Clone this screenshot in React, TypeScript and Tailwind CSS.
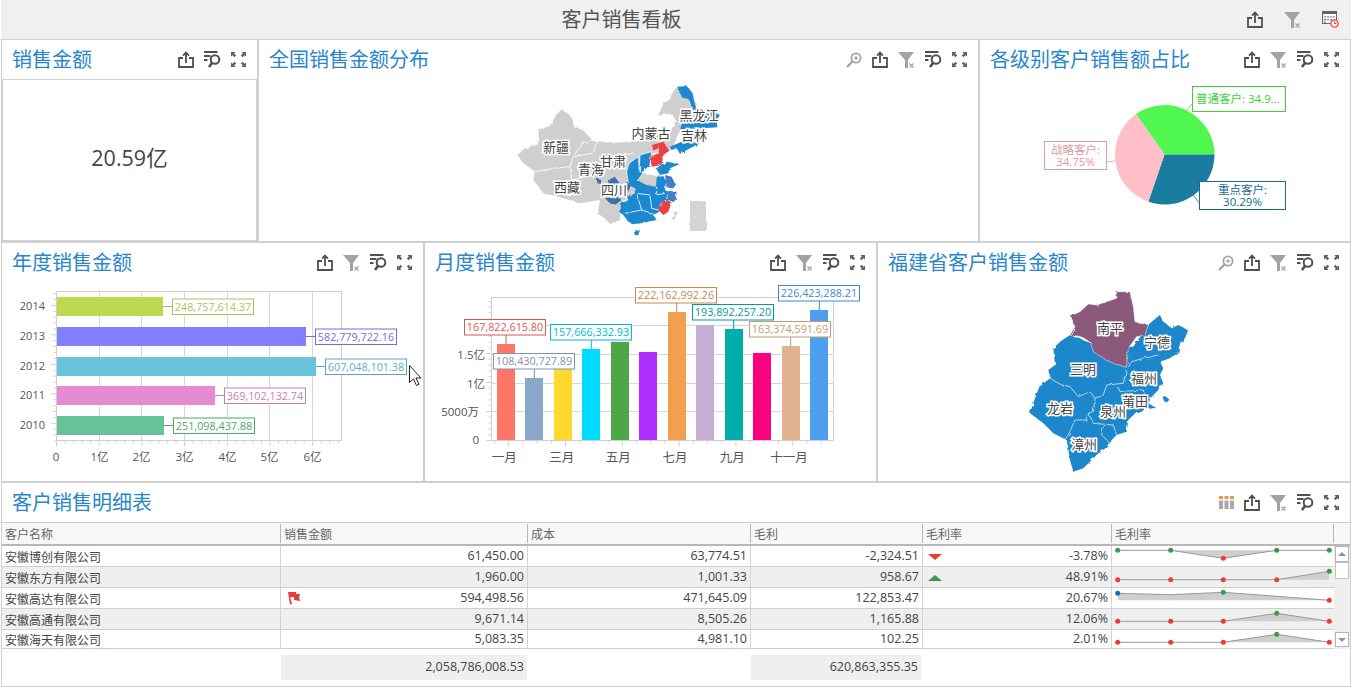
import type { ReactNode } from 'react';

const FONT = "font-['Open_Sans','Noto_Sans_CJK_SC',sans-serif]";
const CJK = "'Noto Sans CJK SC','Noto Sans',sans-serif";

function ShareIcon() {
  return (
    <svg width="16" height="17" viewBox="0 0 16 17" fill="none" stroke="#505050" strokeWidth="1.8">
      <path d="M5 7H1v9h14V7h-4" />
      <path d="M8 12V2M5 4.600 8 1.600l3 3" />
    </svg>
  );
}

function FilterIcon() {
  return (
    <svg width="17" height="17" viewBox="0 0 17 17">
      <path d="M0 1h16l-6 8v8H7V9z" fill="#a3a3a3" />
      <path d="M11.500 12.500l4 4M15.500 12.500l-4 4" stroke="#a3a3a3" strokeWidth="1.200" fill="none" />
    </svg>
  );
}

function ListSearchIcon() {
  return (
    <svg width="17" height="17" viewBox="0 0 17 17" fill="none" stroke="#505050" strokeWidth="1.800">
      <path d="M0 1h13.500M0 5h6.500M0 9h3.500" />
      <circle cx="11" cy="8.500" r="4.300" strokeWidth="2" />
      <path d="M8 12 5 16" strokeWidth="2.600" />
    </svg>
  );
}

function FullIcon() {
  return (
    <svg width="15" height="15" viewBox="0 0 15 15" fill="#626262">
      <path d="M0 0h4.500L3.200 1.500l2 2-1.700 1.700-2-2L0 4.500zM15 0v4.500l-1.500-1.300-2 2-1.700-1.700 2-2L10.500 0zM0 15v-4.500l1.500 1.300 2-2 1.700 1.700-2 2L4.500 15zM15 15h-4.500l1.300-1.500-2-2 1.700-1.700 2 2 1.500-1.300z" />
    </svg>
  );
}

function ZoomIcon() {
  return (
    <svg width="16" height="16" viewBox="0 0 16 16" fill="none" stroke="#a6a6a6">
      <circle cx="10" cy="6" r="4.600" strokeWidth="1.800" />
      <circle cx="10" cy="6" r="1.200" fill="#a6a6a6" />
      <path d="M6.500 9.500 1 15" strokeWidth="2.400" />
    </svg>
  );
}

function ColumnsIcon() {
  return (
    <svg width="15" height="13" viewBox="0 0 15 13">
      <path d="M0 0h4v3H0zM5.500 0h4v3h-4zM11 0h4v3h-4z" fill="#e8994a" />
      <path d="M0 4.500h4V13H0zM5.500 4.500h4V13h-4zM11 4.500h4V13h-4z" fill="#a8a8a8" />
    </svg>
  );
}

function ScheduleIcon() {
  return (
    <svg width="17" height="17" viewBox="0 0 17 17">
      <rect x="0.500" y="0.500" width="14" height="12" fill="#fff" stroke="#666" />
      <rect x="0.500" y="0.500" width="14" height="2.500" fill="#666" />
      <path d="M2 5h2v1.500H2zM5 5h2v1.500H5zM8 5h2v1.500H8zM11 5h2v1.500h-2zM5 8h2v1.500H5zM8 8h2v1.500H8zM2 10.500h2V12H2z" fill="#999" />
      <path d="M2 8h2v1.500H2z" fill="#e33" />
      <circle cx="12.500" cy="12.500" r="3.700" fill="#fff" stroke="#e33" strokeWidth="1.200" />
      <path d="M12.500 10.500v2h2" fill="none" stroke="#e33" />
    </svg>
  );
}

type PanelProps = { title: string; width: string; icons: ReactNode; children: ReactNode };

function Panel({ title, width, icons, children }: PanelProps) {
  return (
    <section className={`flex h-full flex-col border border-[#d0d0d0] bg-white ${width}`}>
      <header className="flex h-[39px] shrink-0 items-center justify-between pl-[10px] pr-[11px]">
        <h2 className="text-[20px] font-normal leading-none text-[#2a86cc]">{title}</h2>
        <div className="flex items-center gap-[10px]">{icons}</div>
      </header>
      <div className="min-h-0 flex-1">{children}</div>
    </section>
  );
}

function Tag({ x, y, w, h = 15.500, color, text, textColor }: { x: number; y: number; w: number; h?: number; color: string; text: string; textColor?: string }) {
  return (
    <g>
      <rect x={x + 0.5} y={y + 0.5} width={w} height={h} fill="#fff" stroke={color} />
      <text x={x + w / 2 + 0.5} y={y + h / 2 + 4.3} textAnchor="middle" fontSize="10.800" fill={textColor ?? color}>
        {text}
      </text>
    </g>
  );
}

function MapLabel({ x, y, text }: { x: number; y: number; text: string }) {
  return (
    <text x={x} y={y + 4.500} textAnchor="middle" fontSize="13" fill="#444" stroke="#fff" strokeWidth="3" paintOrder="stroke" style={{ fontFamily: CJK }}>
      {text}
    </text>
  );
}

// rough edge for the map shapes, the source geometry is far more detailed than what's drawn here
function RoughFilter({ id }: { id: string }) {
  return (
    <filter id={id} x="-5%" y="-5%" width="110%" height="110%">
      <feTurbulence type="fractalNoise" baseFrequency="0.07" numOctaves="2" seed="4" />
      <feDisplacementMap in="SourceGraphic" scale="9" />
    </filter>
  );
}

function ChinaMap() {
  return (
    <svg className="block h-[161px] w-[719px]" viewBox="259 79 719 161">
      <defs>
        <RoughFilter id="rough-china" />
      </defs>
      <g transform="translate(500 40) scale(0.3333)" strokeLinejoin="round" filter="url(#rough-china)">
        <path
          d="M52 345 75 325 118 312 115 268 150 258 168 225 185 208 205 222 218 238 222 262 250 270 278 302 340 308 400 305 455 292 510 272 530 245 515 222 475 225 490 192 510 178 522 150 535 140 590 190 585 240 540 270 515 330 460 340 430 400 480 410 470 470 400 460 370 480 360 540 330 552 310 530 292 522 300 480 240 490 180 472 130 460 100 420 105 395 70 370z"
          fill="#cfcfcf"
        />
        <path d="M105 395 160 385 210 380 220 350 280 340 290 305M210 380 215 420 300 400M220 350 245 312 280 300M300 400 330 350 400 340" fill="none" stroke="#fff" strokeWidth="2.500" />
        <path d="M532 140 560 138 578 160 585 195 592 210 578 208 568 180 545 170z" fill="#1f88cf" />
        <path d="M592 210 648 220 660 225 650 240 652 262 610 265 562 266 540 268 546 250 600 245z" fill="#1f88cf" />
        <path d="M560 270 620 270 615 295 590 302 570 300z" fill="#1f88cf" />
        <path d="M510 320 545 305 570 305 600 310 570 325 540 342 530 325 515 330z" fill="#1f88cf" />
        <path d="M456 315 490 305 508 332 490 345 485 375 455 380 450 350 475 340 480 322 460 332z" fill="#ee4040" />
        <path d="M468 385 500 365 540 372 510 385 505 400 480 405z" fill="#1f88cf" />
        <path d="M420 345 455 335 450 375 430 395 418 395z" fill="#1f88cf" stroke="#fff" strokeWidth="2" />
        <path d="M388 370 415 350 418 395 430 398 410 425 385 430 380 395z" fill="#1f88cf" stroke="#fff" strokeWidth="2" />
        <path d="M290 415 303 420 303 432 292 430zM330 418 345 410 358 428 340 436 325 430zM380 432 395 430 385 455 378 450zM315 475 350 470 365 480 345 495 330 490z" fill="#3a6fa8" />
        <path
          d="M380 432 400 420 420 425 440 435 468 440 470 412 490 408 498 425 495 450 505 455 498 480 480 490 478 515 460 525 470 540 445 545 425 550 400 552 385 545 370 525 358 515 365 490 385 480 380 470 405 460 405 445z"
          fill="#1f88cf"
        />
        <path d="M410 460 450 465 455 505 475 510M410 460 425 510 460 522M425 510 375 520M470 440 470 465 495 460" fill="none" stroke="#fff" strokeWidth="2.500" />
        <path d="M495 405 515 410 527 435 520 445 500 442z" fill="#4180c9" />
        <path d="M505 452 530 455 527 480 500 487z" fill="#4180c9" />
        <path d="M490 482 515 487 505 515 490 525 477 512 482 490z" fill="#ee4040" />
        <path d="M402 577 420 570 415 585 405 586z" fill="#1f88cf" />
        <path d="M525 515 533 515 522 542 516 535z" fill="#cfcfcf" />
        <rect x="570" y="483" width="48" height="90" fill="#d4d4d4" />
        <path d="M590 495h3v3h-3zM605 510h3v3h-3zM585 530h3v3h-3zM600 545h3v3h-3zM578 555h3v3h-3z" fill="#f4f4f4" />
      </g>
      <MapLabel x={556} y={147} text="新疆" />
      <MapLabel x={591} y={169} text="青海" />
      <MapLabel x={613} y={161} text="甘肃" />
      <MapLabel x={567} y={187} text="西藏" />
      <MapLabel x={614} y={190} text="四川" />
      <MapLabel x={651} y={133} text="内蒙古" />
      <MapLabel x={699} y={115} text="黑龙江" />
      <MapLabel x={694} y={135} text="吉林" />
    </svg>
  );
}

function PieChart() {
  return (
    <svg className="block h-[161px] w-[370px]" viewBox="980 79 370 161">
      <path d="M1164.500 154.500 1136 114A50 50 0 0 1 1214.500 154.500z" fill="#4ff74f" />
      <path d="M1164.500 154.500H1214.500A50 50 0 0 1 1148.300 201.800z" fill="#1a7c9f" />
      <path d="M1164.500 154.500 1148.300 201.800A50 50 0 0 1 1136 114z" fill="#ffbfc9" />
      <path d="M1187 110 1192 104" stroke="#8fc98f" fill="none" />
      <path d="M1107 162 1115 161" stroke="#e3b0b8" fill="none" />
      <path d="M1193 195 1200 204" stroke="#5a8fa5" fill="none" />
      <rect x="1192.500" y="86.500" width="93" height="25" fill="#fff" stroke="#3fd03f" />
      <text x="1196" y="103" fontSize="11.500" fill="#3ed03e">普通客户: 34.9...</text>
      <rect x="1044.500" y="141.500" width="62" height="28" fill="#fff" stroke="#d99fa8" />
      <text textAnchor="middle" fontSize="11.500" fill="#dc9aa5">
        <tspan x="1075.500" y="153.500">战略客户:</tspan>
        <tspan x="1075.500" y="165.500">34.75%</tspan>
      </text>
      <rect x="1199.500" y="181.500" width="86" height="28" fill="#fff" stroke="#1a6c8c" />
      <text textAnchor="middle" fontSize="11.500" fill="#1a6c8c">
        <tspan x="1242.500" y="193.500">重点客户:</tspan>
        <tspan x="1242.500" y="205.500">30.29%</tspan>
      </text>
    </svg>
  );
}

const YEARS = [
  { year: '2014', top: 297, end: 163, fill: '#bcd94f', line: '#b3bf5e', text: '#b3bf5e', value: '248,757,614.37', labelX: 172 },
  { year: '2013', top: 327, end: 306, fill: '#7f7fff', line: '#6f6fd8', text: '#6f6fd8', value: '582,779,722.16', labelX: 315 },
  { year: '2012', top: 357, end: 316, fill: '#68c4dd', line: '#5ba6b8', text: '#5bb0c4', value: '607,048,101.38', labelX: 325 },
  { year: '2011', top: 386, end: 215, fill: '#e68ad2', line: '#c67fb4', text: '#c67fb4', value: '369,102,132.74', labelX: 224 },
  { year: '2010', top: 416, end: 164, fill: '#66c397', line: '#4ba670', text: '#4ba670', value: '251,098,437.88', labelX: 173 },
];

function YearChart() {
  const grid = [99.500, 141.500, 184.500, 227.500, 269.500, 312.500];
  const xLabels = ['0', '1亿', '2亿', '3亿', '4亿', '5亿', '6亿'];
  return (
    <svg className="block h-[199px] w-[421px]" viewBox="2 282 421 199">
      <rect x="56.500" y="291.500" width="285" height="149" fill="#fff" stroke="#cfcfcf" />
      {grid.map((x) => (
        <path key={x} d={`M${x} 291V441`} stroke="#d6d6d6" fill="none" />
      ))}
      {Array.from({ length: 34 }, (_, i) => (
        <path key={i} d={`M${56.500 + i * 8.540} 441v${i % 5 === 0 ? 5 : 2.500}`} stroke="#cfcfcf" fill="none" />
      ))}
      {Array.from({ length: 26 }, (_, i) => (
        <path key={i} d={`M56 ${293.500 + i * 5.900}h-${i % 5 === 2 ? 5 : 2.500}`} stroke="#cfcfcf" fill="none" />
      ))}
      {YEARS.map((y) => (
        <g key={y.year}>
          <text x="45" y={y.top + 12.800} textAnchor="end" fontSize="11" fill="#555">
            {y.year}
          </text>
          <rect x="57" y={y.top} width={y.end - 57} height="19" fill={y.fill} />
          <path d={`M${y.end} ${y.top + 9.500}H${y.labelX}`} stroke={y.line} fill="none" />
          <Tag x={y.labelX} y={y.top + 1.500} w={81} color={y.line} text={y.value} textColor={y.text} />
        </g>
      ))}
      {xLabels.map((t, i) => (
        <text key={t} x={i === 0 ? 56 : grid[i - 1]} y="460.500" textAnchor="middle" fontSize="11.500" fill="#555">
          {t}
        </text>
      ))}
      <path d="M409.500 365.500v17l4-3.500 3 6.500 2.500-1.200-3-6.300h5z" fill="#fff" stroke="#222" />
    </svg>
  );
}

// coordinates read off the 3x crop, so they get divided back when drawn
const MONTHS = [
  { x: 216, top: 297, fill: '#ff7566' },
  { x: 300, top: 399, fill: '#8aa8cc' },
  { x: 387, top: 360, fill: '#ffd92b' },
  { x: 471, top: 312, fill: '#00dcff' },
  { x: 558, top: 291, fill: '#4ca845' },
  { x: 642, top: 321, fill: '#ae2fff' },
  { x: 729, top: 201, fill: '#f2a04f' },
  { x: 813, top: 240, fill: '#c4aed4' },
  { x: 900, top: 252, fill: '#00adab' },
  { x: 984, top: 324, fill: '#ff007f' },
  { x: 1071, top: 303, fill: '#e3b391' },
  { x: 1155, top: 195, fill: '#4f9ff0' },
];

const MONTH_TAGS = [
  { x: 119, y: 224, color: '#df5550', text: '167,822,615.80', lx: 243, ly: 269, ly2: 297 },
  { x: 377, y: 238, color: '#00bcd4', text: '157,666,332.93', lx: 499, ly: 284, ly2: 312 },
  { x: 632, y: 127, color: '#c58a50', text: '222,162,992.26', lx: 755, ly: 173, ly2: 201 },
  { x: 802, y: 178, color: '#009c9a', text: '193,892,257.20', lx: 926, ly: 224, ly2: 252 },
  { x: 973, y: 230, color: '#c0a070', text: '163,374,591.69', lx: 1097, ly: 275, ly2: 303 },
  { x: 1060, y: 122, color: '#3f88d0', text: '226,423,288.21', lx: 1183, ly: 167, ly2: 195 },
  { x: 206, y: 325, color: '#7f92b2', text: '108,430,727.89', lx: 328, ly: 371, ly2: 399 },
];

function MonthChart() {
  const zx = (v: number) => 425 + v / 3;
  const zy = (v: number) => 245 + v / 3;
  const gridY = [325.500, 354.500, 383.500, 411.500];
  return (
    <svg className="block h-[199px] w-[451px]" viewBox="425 282 451 199">
      <rect x="491.500" y="297.500" width="342" height="143" fill="#fff" stroke="#cfcfcf" />
      {gridY.map((y) => (
        <path key={y} d={`M491 ${y}H834`} stroke="#d6d6d6" fill="none" />
      ))}
      {Array.from({ length: 25 }, (_, i) => (
        <path key={i} d={`M491 ${440.500 - i * 5.800}h-${i % 5 === 0 ? 5 : 2.500}`} stroke="#cfcfcf" fill="none" />
      ))}
      {Array.from({ length: 24 }, (_, i) => (
        <path key={i} d={`M${494.500 + i * 14.200} 441v${i % 4 === 1 ? 5 : 2.500}`} stroke="#cfcfcf" fill="none" />
      ))}
      {MONTHS.map((m) => (
        <rect key={m.x} x={zx(m.x)} y={zy(m.top)} width="18" height={440 - zy(m.top)} fill={m.fill} />
      ))}
      <text x="485" y="358.500" textAnchor="end" fontSize="11.500" fill="#555">1.5亿</text>
      <text x="485" y="387.500" textAnchor="end" fontSize="11.500" fill="#555">1亿</text>
      <text x="479" y="415.500" textAnchor="end" fontSize="11.500" fill="#555">5000万</text>
      <text x="479" y="444" textAnchor="end" fontSize="11.500" fill="#555">0</text>
      {[
        ['一月', 238],
        ['三月', 410],
        ['五月', 580],
        ['七月', 750],
        ['九月', 922],
        ['十一月', 1092],
      ].map(([t, x]) => (
        <text key={t} x={zx(x as number)} y="461.500" textAnchor="middle" fontSize="12.500" fill="#555">
          {t}
        </text>
      ))}
      {MONTH_TAGS.map((t) => (
        <g key={t.text}>
          <path d={`M${zx(t.lx)} ${zy(t.ly)}V${zy(t.ly2)}`} stroke={t.color} fill="none" />
          <Tag x={Math.floor(zx(t.x))} y={Math.floor(zy(t.y))} w={81} color={t.color} text={t.text} />
        </g>
      ))}
    </svg>
  );
}

function FujianMap() {
  return (
    <svg className="block h-[199px] w-[472px]" viewBox="878 282 472 199">
      <defs>
        <RoughFilter id="rough-fujian" />
      </defs>
      <g transform="translate(1000 280) scale(0.3333)" strokeLinejoin="round" filter="url(#rough-fujian)">
        <path
          d="M210 165 180 185 160 205 165 255 145 270 150 295 118 320 105 355 90 400 130 430 160 460 200 480 210 540 220 575 250 565 270 545 295 520 325 500 335 480 350 465 380 455 385 420 410 395 415 400 440 385 470 385 445 370 455 350 470 335 490 310 480 285 490 265 480 245 495 240 510 235 535 215 540 190 555 175 565 150 535 135 515 145 490 125 480 105 455 125 445 135 400 200 300 200z"
          fill="#1f88cb"
        />
        <path d="M495 350 505 355 498 368 490 360z" fill="#1f88cb" />
        <path d="M385 262 395 245 430 235 475 225" fill="none" stroke="#fff" strokeWidth="2" />
        <path d="M380 265 370 310 320 315 310 345 285 355" fill="none" stroke="#fff" strokeWidth="2" />
        <path d="M150 295 185 315 210 320 235 350 270 335 285 355 280 395 265 400 258 420 225 420 205 465 195 478" fill="none" stroke="#fff" strokeWidth="2" />
        <path d="M265 400 280 430 340 435 350 465M310 440 305 465 330 490" fill="none" stroke="#fff" strokeWidth="2" />
        <path d="M355 322 360 335 430 330 435 350 415 385" fill="none" stroke="#fff" strokeWidth="2" />
        <path
          d="M212 108 240 95 265 72 290 75 350 55 350 35 390 35 400 80 405 125 445 135 435 165 410 170 385 205 380 262 340 250 310 235 280 215 275 190 245 170 210 165 225 140z"
          fill="#8b5a7a"
          stroke="#fff"
          strokeWidth="1.500"
        />
      </g>
      <MapLabel x={1110} y={328} text="南平" />
      <MapLabel x={1157} y={342} text="宁德" />
      <MapLabel x={1083} y={369} text="三明" />
      <MapLabel x={1144} y={378} text="福州" />
      <MapLabel x={1135} y={401} text="莆田" />
      <MapLabel x={1113} y={411} text="泉州" />
      <MapLabel x={1060} y={408} text="龙岩" />
      <MapLabel x={1084} y={444} text="漳州" />
    </svg>
  );
}

const G = '#3a9a4a';
const R = '#ee3a3a';
const B = '#1a6cc0';
const SPARK_X = [5.700, 58.700, 111.300, 164.700, 217.300];

type Spark = { base: number; ys: number[]; colors: (string | null)[] };

function Sparkline({ base, ys, colors }: Spark) {
  const line = ys.map((y, i) => `${SPARK_X[i]},${y}`).join(' ');
  const area = `${SPARK_X[0]},${base} ${line} ${SPARK_X[4]},${base}`;
  return (
    <svg className="block h-[20px] w-[222px]" viewBox="0 0 222 20">
      <polygon points={area} fill="#cfcfcf" />
      <polyline points={line} fill="none" stroke="#999" />
      {colors.map((c, i) => c && <circle key={i} cx={SPARK_X[i]} cy={ys[i]} r="2.500" fill={c} />)}
    </svg>
  );
}

type Row = { name: string; sales: string; cost: string; profit: string; rate: string; mark?: 'up' | 'down'; flag?: boolean; spark: Spark };

const ROWS: Row[] = [
  { name: '安徽博创有限公司', sales: '61,450.00', cost: '63,774.51', profit: '-2,324.51', rate: '-3.78%', mark: 'down', spark: { base: 4.300, ys: [4.300, 4.300, 12.300, 4.300, 4.300], colors: [G, G, R, G, G] } },
  { name: '安徽东方有限公司', sales: '1,960.00', cost: '1,001.33', profit: '958.67', rate: '48.91%', mark: 'up', spark: { base: 12.700, ys: [12.700, 12.700, 12.700, 12.700, 4.300], colors: [R, R, R, R, G] } },
  { name: '安徽高达有限公司', sales: '594,498.56', cost: '471,645.09', profit: '122,853.47', rate: '20.67%', flag: true, spark: { base: 12.300, ys: [5.300, 6.700, 4.300, 8.300, 12.300], colors: [B, null, G, null, R] } },
  { name: '安徽高通有限公司', sales: '9,671.14', cost: '8,505.26', profit: '1,165.88', rate: '12.06%', spark: { base: 12.300, ys: [12.300, 12.300, 12.300, 4.300, 12.300], colors: [R, R, R, G, R] } },
  { name: '安徽海天有限公司', sales: '5,083.35', cost: '4,981.10', profit: '102.25', rate: '2.01%', spark: { base: 12.300, ys: [12.300, 12.300, 12.300, 4.300, 12.300], colors: [R, R, R, G, R] } },
];

function DetailTable() {
  return (
    <div className="text-[12px] leading-none text-[#444]">
      <div className="flex h-[24px] border-y border-y-[#cfcfcf] border-b-2 border-b-[#b8b8b8] bg-[#f7f7f7] text-[#666]">
        {[
          ['客户名称', 'w-[279px]'],
          ['销售金额', 'w-[247px]'],
          ['成本', 'w-[223px]'],
          ['毛利', 'w-[172px]'],
          ['毛利率', 'w-[189px]'],
          ['毛利率', 'w-[222px]'],
        ].map(([t, w], i) => (
          <div key={i} className={`flex h-[19px] items-center self-center border-r border-[#b8b8b8] pl-[3px] pt-[2px] ${w}`}>
            {t}
          </div>
        ))}
      </div>
      <div className="flex">
        <div className="w-[1332px]">
          {ROWS.map((r, i) => (
            <div key={r.name} className={`flex items-center border-b border-[#cfcfcf] text-[12.5px] ${i === 4 ? 'h-[19px]' : 'h-[21px]'} ${i % 2 === 1 ? 'bg-[#efefef]' : 'bg-white'}`}>
              <div className="flex h-full w-[279px] items-center border-r border-[#d4d4d4] pl-[3px] pt-[3px] text-[12px]">{r.name}</div>
              <div className="relative flex h-full w-[247px] items-center justify-end border-r border-[#d4d4d4] pr-[3px] pt-[1px]">
                {r.flag && (
                  <svg className="absolute left-[6px] top-[3px]" width="14" height="14" viewBox="0 0 14 14" fill="#ee3a3a">
                    <path d="M1 1 9 1 9 3 13 3 12 7 13.500 10 7 9 7 6 3.200 6 5 13 3 13.500z" />
                  </svg>
                )}
                {r.sales}
              </div>
              <div className="flex h-full w-[223px] items-center justify-end border-r border-[#d4d4d4] pr-[3px] pt-[1px]">{r.cost}</div>
              <div className="flex h-full w-[172px] items-center justify-end border-r border-[#d4d4d4] pr-[3px] pt-[1px]">{r.profit}</div>
              <div className="flex h-full w-[189px] items-center justify-between border-r border-[#d4d4d4] pl-[5px] pr-[3px] pt-[1px]">
                <span className="block w-[14px]">
                  {r.mark === 'down' && <span className="block h-0 w-0 border-x-[7px] border-t-[6px] border-x-transparent border-t-[#ee3a3a]" />}
                  {r.mark === 'up' && <span className="block h-0 w-0 border-x-[7px] border-b-[6px] border-x-transparent border-b-[#3a9a4a]" />}
                </span>
                {r.rate}
              </div>
              <div className="h-full w-[222px]">
                <Sparkline {...r.spark} />
              </div>
            </div>
          ))}
        </div>
        <div className="flex w-[16px] flex-col bg-[#efefef] pl-[1px] pr-[1px]">
          <div className="flex h-[16px] items-center justify-center border border-[#b5b5b5] bg-white">
            <span className="h-0 w-0 border-x-[4px] border-b-[4px] border-x-transparent border-b-[#8f8fa0]" />
          </div>
          <div className="h-[17px] border border-[#c2c2c2] bg-white" />
          <div className="flex-1" />
          <div className="mb-[2px] flex h-[15px] items-center justify-center border border-[#b5b5b5] bg-white">
            <span className="h-0 w-0 border-x-[4px] border-t-[4px] border-x-transparent border-t-[#8f8fa0]" />
          </div>
        </div>
      </div>
      <div className="flex pt-[6px] text-[12.5px]">
        <div className="flex h-[25px] w-[246px] translate-x-[279px] items-center justify-end bg-[#efefef] pr-[3px]">2,058,786,008.53</div>
        <div className="flex h-[25px] w-[170px] translate-x-[503px] items-center justify-end bg-[#efefef] pr-[3px]">620,863,355.35</div>
      </div>
    </div>
  );
}

export default function App() {
  return (
    <div className={`h-[689px] w-[1351px] overflow-hidden bg-white pl-px text-[#444] ${FONT}`}>
      <div className="flex h-[39px] items-center bg-[#f0f0f0]">
        <h1 className="flex-1 text-center text-[20px] font-normal text-[#555]">客户销售看板</h1>
        <div className="flex w-[109px] items-center gap-[21px] pl-[5px]">
          <ShareIcon />
          <FilterIcon />
          <ScheduleIcon />
        </div>
      </div>
      <div className="flex h-[203px]">
        <Panel title="销售金额" width="w-[257px]" icons={<><ShareIcon /><ListSearchIcon /><FullIcon /></>}>
          <div className="flex h-full items-center justify-center border border-[#d0d0d0] pb-[3px] text-[21.500px]">20.59亿</div>
        </Panel>
        <Panel title="全国销售金额分布" width="w-[721px]" icons={<><ZoomIcon /><ShareIcon /><FilterIcon /><ListSearchIcon /><FullIcon /></>}>
          <ChinaMap />
        </Panel>
        <Panel title="各级别客户销售额占比" width="w-[372px]" icons={<><ShareIcon /><FilterIcon /><ListSearchIcon /><FullIcon /></>}>
          <PieChart />
        </Panel>
      </div>
      <div className="flex h-[240px]">
        <Panel title="年度销售金额" width="w-[423px]" icons={<><ShareIcon /><FilterIcon /><ListSearchIcon /><FullIcon /></>}>
          <YearChart />
        </Panel>
        <Panel title="月度销售金额" width="w-[453px]" icons={<><ShareIcon /><FilterIcon /><ListSearchIcon /><FullIcon /></>}>
          <MonthChart />
        </Panel>
        <Panel title="福建省客户销售金额" width="w-[474px]" icons={<><ZoomIcon /><ShareIcon /><FilterIcon /><ListSearchIcon /><FullIcon /></>}>
          <FujianMap />
        </Panel>
      </div>
      <div className="h-[205px]">
        <Panel title="客户销售明细表" width="w-[1350px]" icons={<><ColumnsIcon /><ShareIcon /><FilterIcon /><ListSearchIcon /><FullIcon /></>}>
          <DetailTable />
        </Panel>
      </div>
    </div>
  );
}
